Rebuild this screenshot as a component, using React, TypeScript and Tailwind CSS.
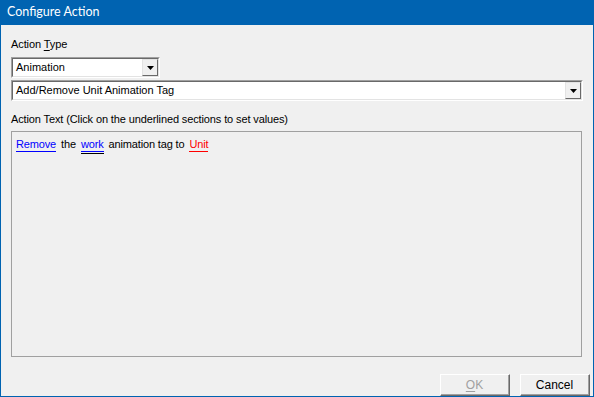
import React from "react";

const font = { fontFamily: '"Liberation Sans", Arial, sans-serif' };

function Arrow() {
  return (
    <svg width="7" height="4" viewBox="0 0 7 4" className="block">
      <path d="M0 0H7L3.5 4Z" fill="#000" />
    </svg>
  );
}

function Combo({ text, className }: { text: string; className: string }) {
  return (
    <div
      className={`flex h-[21px] border-t border-l border-t-[#a0a0a0] border-l-[#a0a0a0] border-b border-r border-b-white border-r-white ${className}`}
    >
      <div className="flex flex-1 border-t border-l border-t-[#696969] border-l-[#696969] border-b border-r border-b-[#e3e3e3] border-r-[#e3e3e3] bg-white">
        <div className="flex-1 pl-[3px] pt-[2px] text-[11px] leading-[13px] text-black">{text}</div>
        <div className="flex w-[16px] items-center justify-center border-t border-l border-t-[#e3e3e3] border-l-[#e3e3e3] border-b border-r border-b-[#696969] border-r-[#696969] bg-[#f0f0f0]">
          <Arrow />
        </div>
      </div>
    </div>
  );
}

function Btn({ children, disabled }: { children: React.ReactNode; disabled?: boolean }) {
  return (
    <div className="flex h-[22px] w-[70px] border-t border-l border-t-white border-l-white border-b border-r border-b-[#696969] border-r-[#696969]">
      <div
        className={`flex flex-1 items-center justify-center border-b border-r border-b-[#a0a0a0] border-r-[#a0a0a0] bg-[#f0f0f0] text-[12px] ${
          disabled ? "text-[#a0a0a0]" : "text-black"
        }`}
      >
        {children}
      </div>
    </div>
  );
}

export default function App() {
  return (
    <div className="h-[397px] w-[594px] bg-[#0063b1] p-[1px] pt-0" style={font}>
      <div className="flex h-[25px] items-center pl-[6px] text-[12.5px] text-white" style={{ fontFamily: 'Lato, "Noto Sans", sans-serif' }}>
        Configure Action
      </div>
      <div className="flex h-[371px] flex-col bg-[#f0f0f0] px-[10px] text-[11px] text-black">
        <div className="mt-[12px] h-[14px] leading-[14px] tracking-[-0.1px]">
          Action <span className="underline underline-offset-2">T</span>ype
        </div>
        <Combo text="Animation" className="mt-[6px] w-[149px]" />
        <Combo text="Add/Remove Unit Animation Tag" className="mt-[2px] w-[572px]" />
        <div className="mt-[11px] h-[14px] leading-[14px] tracking-[-0.12px]">
          Action Text (Click on the underlined sections to set values)
        </div>
        <div className="mt-[5px] h-[226px] w-[571px] border border-[#a0a0a0] px-[4px] pt-[5px]">
          <div className="flex items-start leading-[14px] tracking-[-0.15px]">
            <span className="border-b border-[#0000ff] text-[#0000ff]">Remove</span>
            <span className="ml-[5px]">the</span>
            <span className="ml-[5px] flex flex-col text-[#0000ff]">
              <span className="border-b border-[#0000ff]">work</span>
              <span className="mt-[1px] h-[1px] bg-black" />
            </span>
            <span className="ml-[5px]">animation tag to</span>
            <span className="ml-[5px] border-b border-[#ff0000] text-[#ff0000]">Unit</span>
          </div>
        </div>
        <div className="-mr-[7px] mt-[17px] flex justify-end gap-[10px]">
          <Btn disabled>
            <span className="underline underline-offset-2">O</span>K
          </Btn>
          <Btn>Cancel</Btn>
        </div>
      </div>
    </div>
  );
}
